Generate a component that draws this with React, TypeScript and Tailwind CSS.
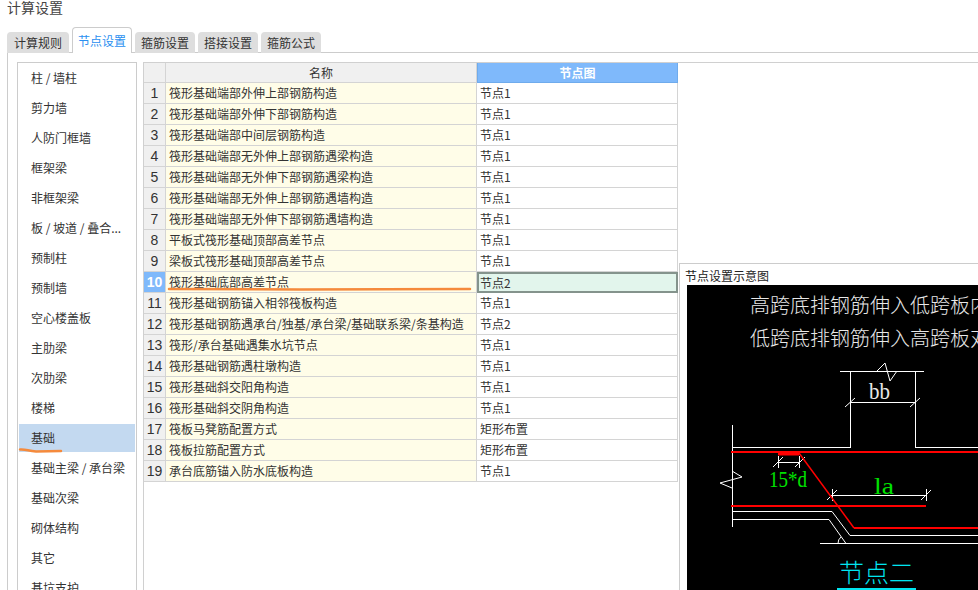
const tabs = ["计算规则", "节点设置", "箍筋设置", "搭接设置", "箍筋公式"];

const categories = [
  "柱 / 墙柱", "剪力墙", "人防门框墙", "框架梁", "非框架梁", "板 / 坡道 / 叠合...",
  "预制柱", "预制墙", "空心楼盖板", "主肋梁", "次肋梁", "楼梯", "基础",
  "基础主梁 / 承台梁", "基础次梁", "砌体结构", "其它", "基坑支护",
];

const rows = [
  ["筏形基础端部外伸上部钢筋构造", "节点1"],
  ["筏形基础端部外伸下部钢筋构造", "节点1"],
  ["筏形基础端部中间层钢筋构造", "节点1"],
  ["筏形基础端部无外伸上部钢筋遇梁构造", "节点1"],
  ["筏形基础端部无外伸下部钢筋遇梁构造", "节点1"],
  ["筏形基础端部无外伸上部钢筋遇墙构造", "节点1"],
  ["筏形基础端部无外伸下部钢筋遇墙构造", "节点1"],
  ["平板式筏形基础顶部高差节点", "节点1"],
  ["梁板式筏形基础顶部高差节点", "节点1"],
  ["筏形基础底部高差节点", "节点2"],
  ["筏形基础钢筋锚入相邻筏板构造", "节点1"],
  ["筏形基础钢筋遇承台/独基/承台梁/基础联系梁/条基构造", "节点2"],
  ["筏形/承台基础遇集水坑节点", "节点1"],
  ["筏形基础钢筋遇柱墩构造", "节点1"],
  ["筏形基础斜交阳角构造", "节点1"],
  ["筏形基础斜交阴角构造", "节点1"],
  ["筏板马凳筋配置方式", "矩形布置"],
  ["筏板拉筋配置方式", "矩形布置"],
  ["承台底筋锚入防水底板构造", "节点1"],
];

function Diagram() {
  return (
    <svg className="block h-[305px] w-[291px]" viewBox="687 285 291 305" fill="none">
      <g fontFamily="'Noto Sans CJK SC', sans-serif" fontSize="20" fontWeight="300" fill="#e8e8e8">
        <text x="750" y="313">高跨底排钢筋伸入低跨板内</text>
        <text x="750" y="346">低跨底排钢筋伸入高跨板对</text>
      </g>
      <g fontFamily="'Liberation Serif', serif" fontSize="23">
        <text x="869" y="399" fill="#e8e8e8" textLength="21" lengthAdjust="spacingAndGlyphs">bb</text>
        <text x="769" y="487" fill="#00e000" textLength="38" lengthAdjust="spacingAndGlyphs">15*d</text>
        <text x="874" y="494" fill="#00e000" textLength="20" lengthAdjust="spacingAndGlyphs">la</text>
      </g>
      <text x="839" y="582" fill="#00e5f0" fontFamily="'Noto Sans CJK SC', sans-serif" fontWeight="300" fontSize="25">节点二</text>
      <rect x="837" y="588" width="79" height="2" fill="#00e5f0" />
      <g stroke="#fff" strokeWidth="1" shapeRendering="crispEdges">
        <path d="M840 371.5H924M850.5 371V447.5M915.5 371V447.5M732 447.5H850.5M915 447.5H978M732.5 425V527" />
        <path d="M850 402.5H915M778 462.5H800M832 495.5H926M778.5 456V468M799.5 456V468M832.5 489V501M926.5 489V501" />
        <path d="M732 511.5H832M732 519.5H829M850 535.5H978M820 543.5H978" />
      </g>
      <g stroke="#fff" strokeWidth="1">
        <path d="M845 407L855 398M910 407L920 398M773 467L783 457M795 467L805 457M827 500L837 490M921 500L931 490" />
        <path d="M832 511.5L850 535.5M829 519.5L846 543.5M838 543.5A8 8 0 0 1 841 537" />
        <path d="M732 471L742 477L720 483L732 488M877 371L885 363L890 381L897 371" />
      </g>
      <path d="M731 452H978M731 506H926M854 528H978" stroke="#ff0000" strokeWidth="2" />
      <path d="M799 453L854 528" stroke="#ff0000" strokeWidth="1.5" />
      <rect x="778" y="452" width="21" height="3.5" fill="#ff0000" />
    </svg>
  );
}

export default function App() {
  return (
    <div className="relative h-[590px] w-[978px] overflow-hidden bg-white text-[12px] text-[#333] font-['Noto_Sans_CJK_SC',sans-serif]">
      <div className="h-[27px] pl-[7px] text-[14px] leading-[15px] text-[#444]">计算设置</div>

      <div className="relative z-10 flex h-[26px] items-end gap-[3px] pl-[7px]">
        {tabs.map((t, i) =>
          i === 1 ? (
            <div key={t} className="flex h-[26px] w-[60px] items-center justify-center rounded-t-[4px] border border-b-0 border-[#ccc] bg-white text-[#2a8ff0]">
              {t}
            </div>
          ) : (
            <div key={t} className={`flex h-[21px] items-center justify-center rounded-t-[4px] bg-[#dedede] ${i === 0 ? "w-[62px]" : "w-[60px]"}`}>
              {t}
            </div>
          )
        )}
      </div>

      <div className="ml-[7px] -mt-px flex h-[538px] items-start gap-[6px] border-l border-t border-[#ccc] pl-[9px] pt-[9px]">
        <div className="h-[540px] w-[120px] shrink-0 border border-[#ccc] px-px">
          {categories.map((c) => (
            <div key={c} className="h-[30px] py-px">
              <div className={`flex h-[28px] items-center truncate pl-[12px] ${c === "基础" ? "bg-[#c3d9f0]" : ""}`}>{c}</div>
            </div>
          ))}
        </div>

        <div className="h-[540px] flex-1 border-l border-t border-[#d0d0d0]">
          <div className="grid h-[20px] w-[534px] grid-cols-[22px_311px_201px] text-center">
            <div className="border-b border-r border-[#d4d4d4] bg-[#f0f0f0]" />
            <div className="border-b border-r border-[#d4d4d4] bg-[#f0f0f0] leading-[19px]">名称</div>
            <div className="border border-t-0 border-[#6fabec] bg-[#7fb9fb] font-bold leading-[19px] text-white">节点图</div>
          </div>
          {rows.map(([name, node], i) => {
            const on = i === 9;
            return (
              <div key={i} className="grid h-[21px] w-[534px] grid-cols-[22px_311px_201px]">
                <div className={`border-b border-r border-[#d4d4d4] text-center text-[14px] leading-[20px] font-['Liberation_Sans',sans-serif] ${on ? "bg-[#7fb9fb] font-bold text-white" : "bg-[#f0f0f0]"}`}>
                  {i + 1}
                </div>
                <div className="truncate border-b border-r border-[#d4d4d4] bg-[#fffde8] pl-[3px] leading-[20px]">{name}</div>
                <div className={on ? "border-2 border-[#84938c] bg-[#e2f5ec] pl-[1px] leading-[17px]" : "border-b border-r border-[#d4d4d4] pl-[3px] leading-[20px]"}>
                  {node}
                </div>
              </div>
            );
          })}
        </div>
      </div>

      {/* hand-drawn marks over the list and the table */}
      <svg className="absolute left-0 top-0 h-[590px] w-[978px]" fill="none" stroke="#f58a3c" strokeWidth="2.5" strokeLinecap="round">
        <path d="M169 289L300 289.5L470 289" />
        <path d="M20 449.5C26 449 28 451 36 451.5L61 451" />
      </svg>

      <div className="absolute left-[679px] top-[263px] h-[327px] w-[299px] border-l border-t border-[#ccc] bg-white">
        <div className="h-[21px] pl-[5px] pt-[4px] text-[12px] leading-[16px] text-[#222]">节点设置示意图</div>
        <div className="ml-[7px] bg-black">
          <Diagram />
        </div>
      </div>
    </div>
  );
}
